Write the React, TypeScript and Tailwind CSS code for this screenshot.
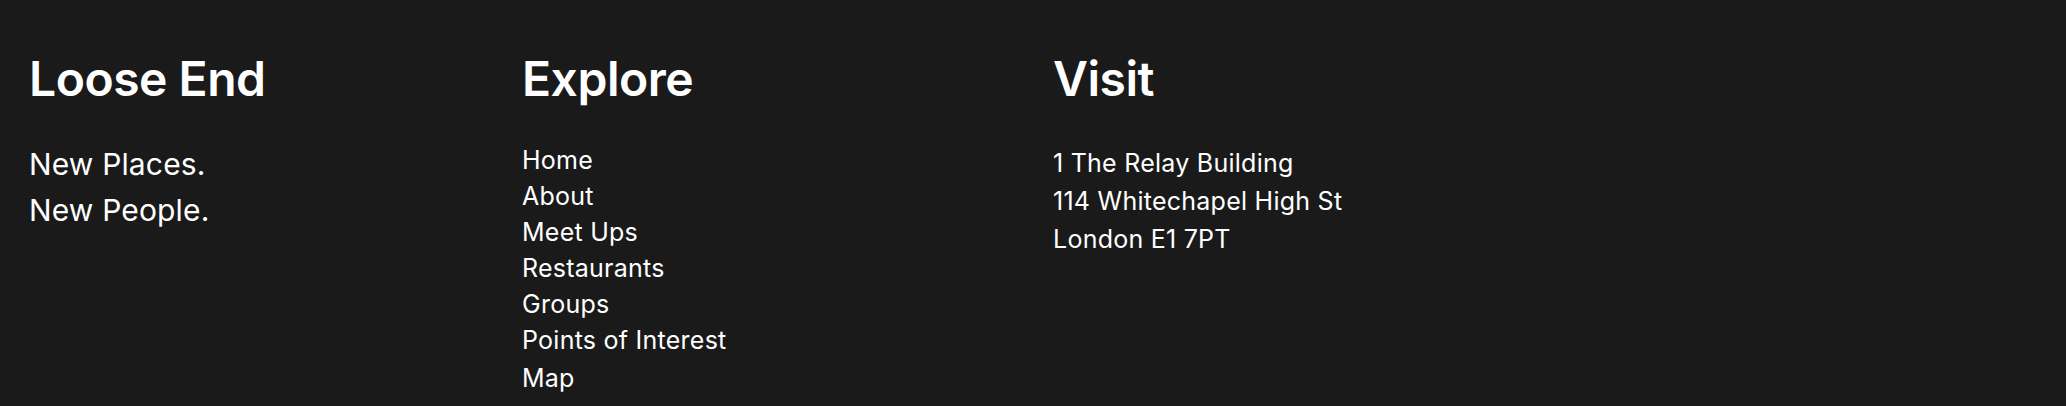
const explore = ["Home", "About", "Meet Ups", "Restaurants", "Groups", "Points of Interest", "Map"];

const address = ["1 The Relay Building", "114 Whitechapel High St", "London E1 7PT"];

export default function App() {
  return (
    <footer
      className="w-full h-[406px] bg-[#1a1a1a] text-white flex px-[29px] pt-[55px]"
      style={{ fontFamily: "Inter, 'Noto Sans', sans-serif" }}
    >
      <div className="w-[493px] shrink-0">
        <h2 className="text-[48px] leading-none font-semibold tracking-[-0.01em]">Loose End</h2>
        <div className="mt-[38px] text-[30px] leading-[46px] tracking-[0.005em]">
          <p>New Places.</p>
          <p>New People.</p>
        </div>
      </div>
      <div className="w-[531px] shrink-0">
        <h2 className="text-[48px] leading-none font-semibold tracking-[-0.01em]">Explore</h2>
        <ul className="mt-[39px] text-[25px] leading-[36px] tracking-[0.01em]">
          {explore.map((item) => (
            <li key={item} className={item === "Map" ? "mt-[2px]" : ""}>
              <a href="#">{item}</a>
            </li>
          ))}
        </ul>
      </div>
      <div>
        <h2 className="text-[48px] leading-none font-semibold tracking-[-0.01em]">Visit</h2>
        <div className="mt-[41px] text-[25px] leading-[38px] tracking-[0.01em]">
          {address.map((line) => (
            <p key={line}>{line}</p>
          ))}
        </div>
      </div>
    </footer>
  );
}
